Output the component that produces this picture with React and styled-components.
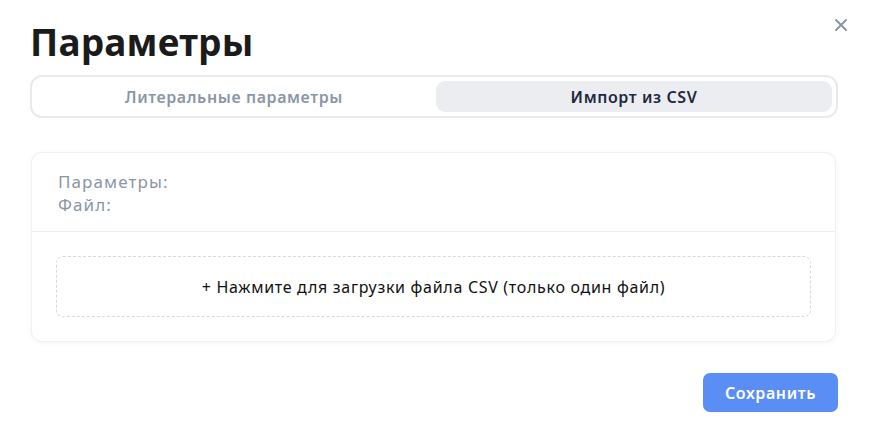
import React, { useState } from 'react';
import styled, { createGlobalStyle } from 'styled-components';

const GlobalStyle = createGlobalStyle`
  body {
    margin: 0;
    background: #ffffff;
    font-family: "Noto Sans", "Open Sans", sans-serif;
  }
`;

const Dialog = styled.div`
  position: relative;
  width: 870px;
  height: 432px;
  box-sizing: border-box;
  padding: 18px 32px 0 30px;
  display: flex;
  flex-direction: column;
`;

const CloseButton = styled.button`
  position: absolute;
  top: 17px;
  right: 21px;
  width: 16px;
  height: 16px;
  padding: 0;
  border: none;
  background: transparent;
  cursor: pointer;
  display: flex;
  align-items: center;
  justify-content: center;
`;

const Title = styled.h1`
  margin: 0;
  font-size: 37px;
  line-height: 48px;
  font-weight: 700;
  color: #1b1b1b;
  letter-spacing: 0.2px;
`;

const Tabs = styled.div`
  margin-top: 9px;
  height: 43px;
  box-sizing: border-box;
  border: 2px solid #e9eaef;
  border-radius: 12px;
  padding: 4px;
  display: grid;
  grid-template-columns: 1fr 1fr;
  gap: 4px;
`;

const Tab = styled.button`
  border: none;
  border-radius: 9px;
  background: ${p => (p.$active ? '#ecedf1' : 'transparent')};
  color: ${p => (p.$active ? '#1d2940' : '#8a96a7')};
  font-family: inherit;
  font-size: 16px;
  font-weight: 600;
  letter-spacing: 0.6px;
  cursor: pointer;
`;

const Card = styled.div`
  margin: 35px 3px 0 2px;
  border-radius: 10px;
  background: #fff;
  box-shadow: 0 0 0 1px #f0f1f4, 0 1px 6px rgba(30, 50, 90, 0.06);
`;

const CardHeader = styled.div`
  padding: 17px 26px 15px;
  border-bottom: 1px solid #eceef1;
  color: #8a96a7;
  font-size: 17px;
  line-height: 23px;
  font-weight: 400;
  letter-spacing: 1.1px;
`;

const CardBody = styled.div`
  padding: 24px;
`;

const DropZone = styled.div`
  height: 61px;
  box-sizing: border-box;
  border: 1px dashed #d9d9d9;
  border-radius: 7px;
  display: flex;
  align-items: center;
  justify-content: center;
  color: #111;
  font-size: 16px;
  letter-spacing: 0.7px;
  cursor: pointer;
`;

const Footer = styled.div`
  margin-top: 32px;
  display: flex;
  justify-content: flex-end;
`;

const SaveButton = styled.button`
  width: 135px;
  height: 39px;
  border: none;
  border-radius: 7px;
  background: #5b8ef5;
  color: #fff;
  font-family: inherit;
  font-size: 16px;
  font-weight: 600;
  letter-spacing: 0.6px;
  cursor: pointer;
`;

export default function App() {
  const [tab, setTab] = useState('csv');

  return (
    <>
      <GlobalStyle />
      <Dialog>
        <CloseButton aria-label="Закрыть">
          <svg width="12" height="12" viewBox="0 0 12 12">
            <path d="M1 1L11 11M11 1L1 11" stroke="#8592a3" strokeWidth="1.8" strokeLinecap="round" />
          </svg>
        </CloseButton>
        <Title>Параметры</Title>
        <Tabs>
          <Tab $active={tab === 'literal'} onClick={() => setTab('literal')}>Литеральные параметры</Tab>
          <Tab $active={tab === 'csv'} onClick={() => setTab('csv')}>Импорт из CSV</Tab>
        </Tabs>
        <Card>
          <CardHeader>
            <div>Параметры:</div>
            <div>Файл:</div>
          </CardHeader>
          <CardBody>
            <DropZone>+ Нажмите для загрузки файла CSV (только один файл)</DropZone>
          </CardBody>
        </Card>
        <Footer>
          <SaveButton>Сохранить</SaveButton>
        </Footer>
      </Dialog>
    </>
  );
}
